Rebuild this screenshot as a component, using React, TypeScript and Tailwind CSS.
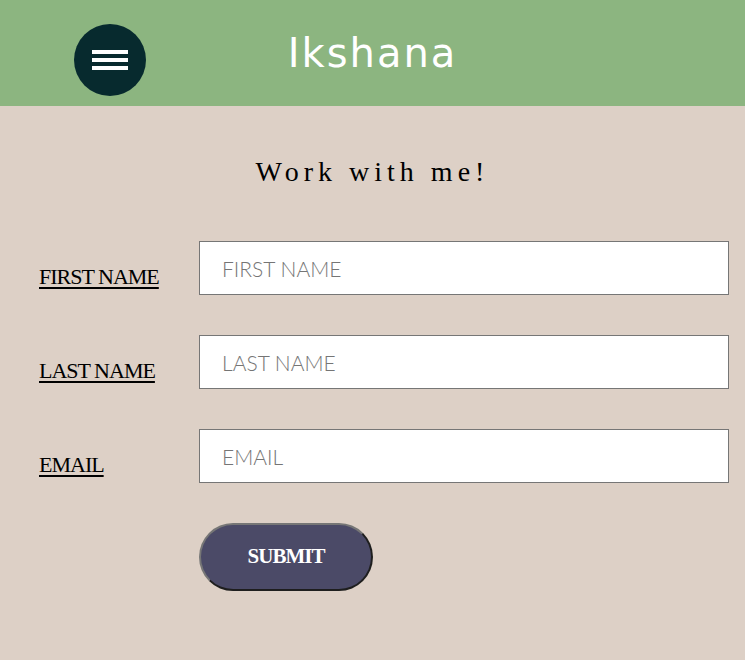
import React from "react";

function Row({ label, placeholder }: { label: string; placeholder: string }) {
  return (
    <div className="flex items-end">
      <label
        className="w-[199px] shrink-0 pl-[39px] pb-[5px] text-[22px] leading-[26px] tracking-[-1px] text-black underline underline-offset-[3px] decoration-2"
        style={{ fontFamily: '"Liberation Serif", serif' }}
      >
        {label}
      </label>
      <input
        type="text"
        placeholder={placeholder}
        className="mr-[16px] h-[54px] flex-1 border border-[#767676] bg-white pl-[22px] text-[21px] font-light text-black placeholder:text-[#757575] outline-none"
        style={{ fontFamily: 'Lato, "Liberation Sans", sans-serif' }}
      />
    </div>
  );
}

export default function App() {
  return (
    <div className="min-h-[660px] w-full bg-[#ddd0c6]">
      <header className="grid h-[106px] grid-cols-[1fr_auto_1fr] items-center bg-[#8cb580]">
        <div className="pl-[74px] pt-[14px]">
          <button className="flex h-[72px] w-[72px] flex-col items-center justify-center gap-[4px] rounded-full bg-[#072a2e]">
            <span className="h-[4px] w-[36px] bg-white" />
            <span className="h-[4px] w-[36px] bg-white" />
            <span className="h-[4px] w-[36px] bg-white" />
          </button>
        </div>
        <h1
          className="text-[40px] leading-none tracking-[2px] text-white"
          style={{ fontFamily: '"Comic Sans MS", "DejaVu Sans", sans-serif' }}
        >
          Ikshana
        </h1>
        <div />
      </header>
      <h2
        className="mt-[50px] text-center text-[28px] leading-[32px] tracking-[5px] text-black"
        style={{ fontFamily: '"Liberation Serif", serif' }}
      >
        Work with me!
      </h2>
      <form className="mt-[53px] flex flex-col gap-[40px]">
        <Row label="FIRST NAME" placeholder="FIRST NAME" />
        <Row label="LAST NAME" placeholder="LAST NAME" />
        <Row label="EMAIL" placeholder="EMAIL" />
        <div className="pl-[199px]">
          <button
            type="button"
            className="h-[68px] w-[174px] rounded-full border-2 border-t-[#767676] border-l-[#767676] border-r-[#1e1e1e] border-b-[#1e1e1e] bg-[#4b4a67] text-[21px] font-bold tracking-[-1px] text-white"
            style={{ fontFamily: '"Liberation Serif", serif' }}
          >
            SUBMIT
          </button>
        </div>
      </form>
    </div>
  );
}
